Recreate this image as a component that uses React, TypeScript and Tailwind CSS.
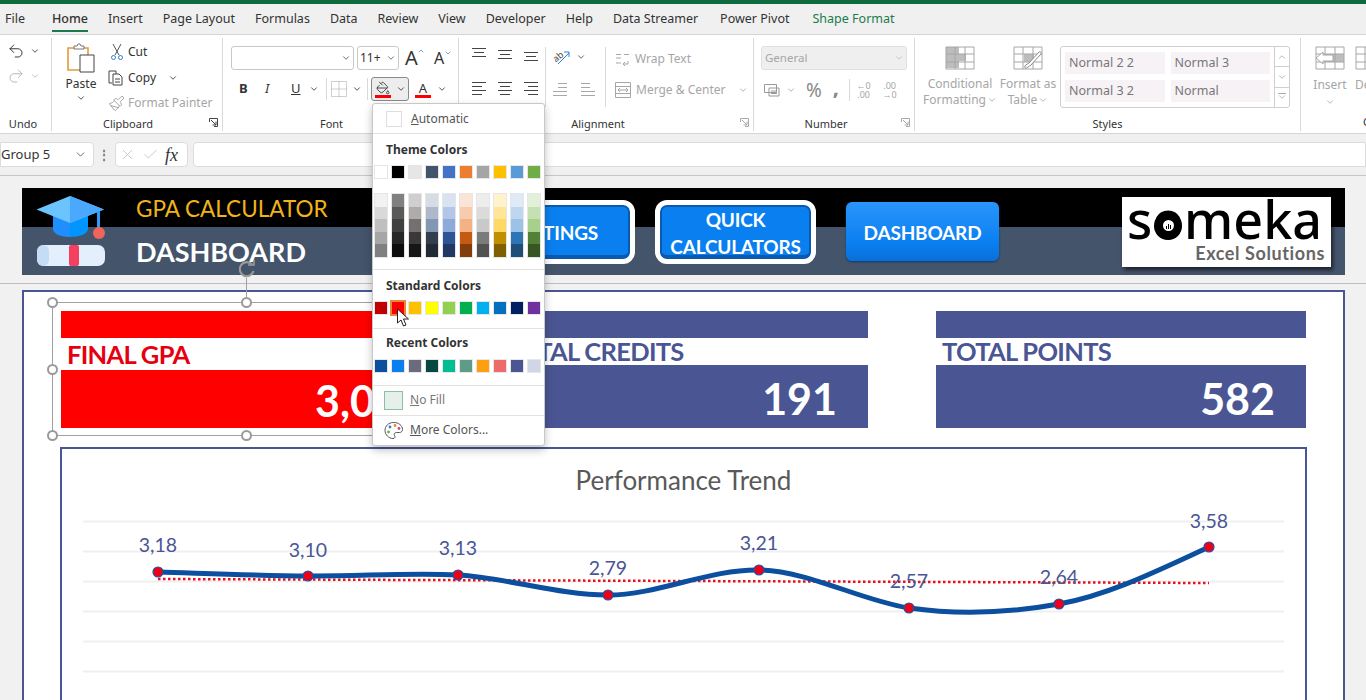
import React from 'react';
import { ChevronDown, ChevronUp, Paintbrush, PaintBucket, Redo2, Undo2, X, Check } from 'lucide-react';

const SANS = 'font-["Noto_Sans",sans-serif]';
const SHEET = 'font-["Lato",sans-serif]';

const TABS = ['Insert', 'Page Layout', 'Formulas', 'Data', 'Review', 'View', 'Developer', 'Help', 'Data Streamer'];

const THEME = ['#ffffff', '#000000', '#e7e6e6', '#44546a', '#4472c4', '#ed7d31', '#a5a5a5', '#ffc000', '#5b9bd5', '#70ad47'];
const SHADES = [
    ['#f2f2f2', '#d9d9d9', '#bfbfbf', '#a6a6a6', '#808080'],
    ['#808080', '#595959', '#404040', '#262626', '#0d0d0d'],
    ['#d0cece', '#aeabab', '#757070', '#3a3838', '#171616'],
    ['#d6dce4', '#adb9ca', '#8497b0', '#333f4f', '#222b35'],
    ['#d9e2f3', '#b4c6e7', '#8eaadb', '#2f5496', '#1f3864'],
    ['#fbe4d5', '#f7cbac', '#f4b183', '#c55a11', '#833c0b'],
    ['#ededed', '#dbdbdb', '#c9c9c9', '#7b7b7b', '#525252'],
    ['#fff2cc', '#ffe599', '#ffd966', '#bf8f00', '#7f6000'],
    ['#deeaf6', '#bdd7ee', '#9cc2e5', '#2e75b5', '#1f4e79'],
    ['#e2efd9', '#c5e0b3', '#a8d08d', '#538135', '#375623'],
];
const STANDARD = ['#c00000', '#ff0000', '#ffc000', '#ffff00', '#92d050', '#00b050', '#00b0f0', '#0070c0', '#002060', '#7030a0'];
const RECENT = ['#0b4f9e', '#0a7ff0', '#6b6b80', '#04483f', '#00bd94', '#5d9c87', '#ff9f10', '#ef6b6b', '#4a5694', '#d0d6e8'];

const POINTS = [
    { x: 158, y: 572, label: '3,18', ly: 552 },
    { x: 308, y: 576, label: '3,10', ly: 557 },
    { x: 458, y: 575, label: '3,13', ly: 555 },
    { x: 608, y: 595, label: '2,79', ly: 575 },
    { x: 759, y: 570, label: '3,21', ly: 550 },
    { x: 909, y: 608, label: '2,57', ly: 588 },
    { x: 1059, y: 604, label: '2,64', ly: 584 },
    { x: 1209, y: 547, label: '3,58', ly: 528 },
];

const Chev = ({ className = '' }: { className?: string }) => (
    <ChevronDown className={`w-[10px] h-[10px] shrink-0 ${className}`} strokeWidth={2} />
);

const Lines = ({ rows, color = '#444' }: { rows: [number, number, number][]; color?: string }) => (
    <svg className="block" width="16" height="14" viewBox="0 0 16 14" fill="none" stroke={color} strokeWidth="1">
        {rows.map(([x1, x2, y], i) => (
            <line key={i} x1={x1} x2={x2} y1={y + 0.5} y2={y + 0.5} />
        ))}
    </svg>
);

const Launcher = ({ color = '#666' }: { color?: string }) => (
    <svg className="absolute right-[4px] bottom-[4px]" width="9" height="9" viewBox="0 0 9 9" fill="none" stroke={color}>
        <path d="M0.5 4V0.5H8.5V8.5H5" />
        <path d="M2 2l5 5M7 3.5V7H3.5" />
    </svg>
);

const Group = ({ label, className, children, launcher, launcherColor, labelClass = '' }: {
    label: string;
    className: string;
    children: React.ReactNode;
    launcher?: boolean;
    launcherColor?: string;
    labelClass?: string;
}) => (
    <div className={`relative shrink-0 h-[93px] border-r border-[#d9d9d9] flex flex-col ${className}`}>
        <div className="flex-1 min-h-0">{children}</div>
        <div className={`text-center text-[11px] leading-[15px] text-[#333] ${labelClass}`}>{label}</div>
        {launcher && <Launcher color={launcherColor} />}
    </div>
);

const GridIcon = ({ variant }: { variant: 'cond' | 'table' | 'insert' }) => (
    <svg width="30" height="24" viewBox="0 0 30 24" fill="none">
        {variant === 'cond' && <path d="M1 1h13v7h7v7h-7v7H1z" fill="#bdbdbd" />}
        {variant === 'table' && <path d="M11 8h10v8H11z" fill="#bdbdbd" />}
        {variant === 'insert' && <path d="M10 8h19v8H10z" fill="#bdbdbd" />}
        <path d="M1 1h28v22H1zM1 8h28M1 16h28M10 1v22M20 1v22" stroke="#a6a6a6" />
        {variant === 'table' && <path d="M15 21c-2 2-4 1-3-1 1-2 3-2 4-3L26 6c1-1 3 1 2 2L18 19c-1 1-2 1-3 2z" fill="#fff" stroke="#8c8c8c" />}
        {variant === 'insert' && <path d="M1 12l7-6v3h10v6H8v3z" fill="#fff" stroke="#a6a6a6" />}
    </svg>
);

const Ribbon = () => (
    <div className={`flex h-[99px] pt-[3px] bg-white border-b border-[#d4d4d4] ${SANS}`}>
        <Group label="Undo" className="w-[52px]" labelClass="pr-[5px]">
            <div className="pl-[7px] pt-[4px] flex flex-col gap-[7px]">
                <div className="flex items-center gap-[5px] text-[#333]">
                    <Undo2 className="w-[18px] h-[18px]" strokeWidth={1.3} />
                    <Chev />
                </div>
                <div className="flex items-center gap-[5px] text-[#b5b5b5]">
                    <Redo2 className="w-[18px] h-[18px]" strokeWidth={1.3} />
                    <Chev />
                </div>
            </div>
        </Group>

        <Group label="Clipboard" className="w-[171px]" labelClass="pr-[18px]" launcher launcherColor="#444">
            <div className="flex">
                <div className="w-[56px] flex flex-col items-center pt-[5px] pl-[2px] text-[12px] leading-[15px] text-[#333]">
                    <svg width="30" height="30" viewBox="0 0 30 30" fill="none">
                        <path d="M2 5h20v22H2z" stroke="#e59a38" strokeWidth="1.6" />
                        <path d="M8 6V3h3l1-2h2l1 2h3v3z" fill="#fff" stroke="#777" />
                        <path d="M14 12h14v17H14z" fill="#fff" stroke="#444" />
                    </svg>
                    <span className="mt-[3px]">Paste</span>
                    <Chev className="mt-[2px]" />
                </div>
                <div className="flex flex-col text-[12px] leading-[20px] pt-[4px] gap-[6px] text-[#333]">
                    <div className="flex items-center gap-[3px] pl-[1px] h-[20px]">
                        <svg width="16" height="18" viewBox="0 0 16 18" fill="none" stroke="#555">
                            <path d="M4 1l6 11M12 1L6 12" />
                            <circle cx="4.500" cy="14.500" r="2" stroke="#2f7fd0" />
                            <circle cx="11.500" cy="14.500" r="2" stroke="#2f7fd0" />
                        </svg>
                        <span>Cut</span>
                    </div>
                    <div className="flex items-center gap-[4px] h-[20px]">
                        <svg width="16" height="16" viewBox="0 0 16 16" fill="none" stroke="#444">
                            <path d="M4 13H1V1h7v3" />
                            <path d="M5 4h6l3 3v8H5zM7 9h5M7 12h5" />
                        </svg>
                        <span>Copy</span>
                        <Chev className="ml-[8px]" />
                    </div>
                    <div className="flex items-center gap-[3px] h-[18px] text-[#a6a6a6]">
                        <Paintbrush className="w-[17px] h-[17px]" strokeWidth={1.4} />
                        <span className="whitespace-nowrap">Format Painter</span>
                    </div>
                </div>
            </div>
        </Group>

        <Group label="Font" className="w-[236px]" labelClass="pr-[18px]">
            <div className="pl-[8px] pt-[8px] flex flex-col gap-[7px]">
                <div className="flex items-center h-[24px]">
                    <div className="w-[123px] h-[24px] border border-[#c8c8c8] rounded-[3px] flex items-center justify-end pr-[2px]"><Chev className="text-[#555]" /></div>
                    <div className="ml-[3px] w-[42px] h-[24px] border border-[#c8c8c8] rounded-[3px] flex items-center justify-between px-[2px] text-[12px] text-[#333]">11+<Chev className="text-[#555]" /></div>
                    <div className="ml-[6px] text-[20px] leading-none text-[#333] relative w-[28px]">A<ChevronUp className="absolute left-[12px] -top-[1px] w-[8px] h-[8px] text-[#2f7fd0]" /></div>
                    <div className="text-[16px] leading-none text-[#333] relative ml-[1px]">A<ChevronDown className="absolute left-[10px] -top-[1px] w-[8px] h-[8px] text-[#2f7fd0]" /></div>
                </div>
                <div className="flex items-center h-[24px] text-[#333]">
                    <span className="ml-[8px] w-[26px] text-[13px] font-bold">B</span>
                    <span className="w-[26px] text-[13px] italic">I</span>
                    <span className="w-[18px] text-[13px] underline">U</span>
                    <Chev />
                    <div className="ml-[7px] h-[22px] w-px bg-[#d9d9d9]" />
                    <svg className="ml-[4px]" width="16" height="16" viewBox="0 0 16 16" fill="none" stroke="#a0a0a0" strokeDasharray="1 1">
                        <path d="M.5.5h15v15H.5zM8 .5v15M.5 8h15" />
                    </svg>
                    <Chev className="ml-[5px]" />
                    <div className="ml-[5px] h-[22px] w-px bg-[#d9d9d9]" />
                    <div className="ml-[3px] w-[38px] h-[24px] border border-[#8a8a8a] rounded-[3px] bg-[#ededed] flex items-center justify-center gap-[5px]">
                        <div className="flex flex-col items-center">
                            <PaintBucket className="w-[14px] h-[14px]" strokeWidth={1.5} />
                            <div className="w-[16px] h-[3px] bg-[#ff0000]" />
                        </div>
                        <Chev />
                    </div>
                    <div className="ml-[6px] flex flex-col items-center w-[16px]">
                        <span className="text-[13px] leading-[14px]">A</span>
                        <div className="w-[16px] h-[3px] bg-[#ff0000]" />
                    </div>
                    <Chev className="ml-[6px]" />
                </div>
            </div>
        </Group>

        <Group label="Alignment" className="w-[295px]" labelClass="pr-[16px]" launcher launcherColor="#aaa">
            <div className="pl-[12px] pt-[9px] flex text-[12px] text-[#a6a6a6]">
                <div className="flex flex-col gap-[20px] w-[74px]">
                    <div className="flex gap-[10px]">
                        <Lines rows={[[1, 15, 1], [3, 13, 5], [1, 15, 9]]} />
                        <Lines rows={[[1, 15, 3], [3, 13, 7], [1, 15, 11]]} />
                        <Lines rows={[[1, 15, 5], [3, 13, 9], [1, 15, 13]]} />
                    </div>
                    <div className="flex gap-[10px]">
                        <Lines rows={[[1, 15, 1], [1, 11, 5], [1, 15, 9], [1, 11, 13]]} />
                        <Lines rows={[[1, 15, 1], [3, 13, 5], [1, 15, 9], [3, 13, 13]]} />
                        <Lines rows={[[1, 15, 1], [5, 15, 5], [1, 15, 9], [5, 15, 13]]} />
                    </div>
                </div>
                <div className="w-px h-[60px] bg-[#d9d9d9] mr-[6px]" />
                <div className="flex flex-col gap-[17px] w-[53px] pt-[2px]">
                    <div className="flex items-center gap-[4px] text-[#444]">
                        <svg width="20" height="16" viewBox="0 0 20 16" fill="none">
                            <text x="1" y="11" fontSize="9" fill="#444" transform="rotate(-40 6 8)">ab</text>
                            <path d="M6 15L17 4M12 3h5v5" stroke="#2f7fd0" />
                        </svg>
                        <Chev />
                    </div>
                    <div className="flex gap-[12px]">
                        <Lines color="#a6a6a6" rows={[[6, 15, 1], [6, 15, 5], [1, 15, 9], [1, 15, 13]]} />
                        <Lines color="#a6a6a6" rows={[[1, 10, 1], [1, 10, 5], [1, 15, 9], [1, 15, 13]]} />
                    </div>
                </div>
                <div className="w-px h-[60px] bg-[#d9d9d9] mr-[9px]" />
                <div className="flex flex-col gap-[11px] pt-[2px]">
                    <div className="flex items-center gap-[4px] h-[20px]">
                        <svg width="16" height="18" viewBox="0 0 16 18" fill="none" stroke="#a6a6a6">
                            <path d="M1 4.500h5M1 8h5M9 4.500h5M1 13h5M13 11v3H8M10 12l-2 2 2 2" />
                        </svg>
                        <span>Wrap Text</span>
                    </div>
                    <div className="flex items-center gap-[5px] h-[20px] whitespace-nowrap">
                        <svg width="16" height="16" viewBox="0 0 16 16" fill="none" stroke="#a6a6a6">
                            <path d="M.5.500h15v15H.5zM.5 4.500h15M.5 11.500h15M3 8h10M5 6L3 8l2 2M11 6l2 2-2 2" />
                        </svg>
                        <span>Merge &amp; Center</span>
                        <Chev className="ml-[7px]" />
                    </div>
                </div>
            </div>
        </Group>

        <Group label="Number" className="w-[161px]" labelClass="pr-[16px]" launcher launcherColor="#aaa">
            <div className="pl-[7px] pt-[8px] text-[#a6a6a6]">
                <div className="w-[146px] h-[24px] rounded-[3px] bg-[#efefef] border border-[#e0e0e0] flex items-center text-[11.5px] pl-[3px] pr-[2px] justify-between">
                    General
                    <Chev className="text-[#bbb]" />
                </div>
                <div className="flex items-center h-[24px] mt-[8px] pl-[3px]">
                    <svg width="16" height="14" viewBox="0 0 16 14" fill="none" stroke="#999">
                        <path d="M.5 1.500h12v8H.5zM5 5h10v8H5zM7 8h6M7 10.500h6" />
                    </svg>
                    <Chev className="ml-[6px]" />
                    <span className="ml-[10px] text-[19px] leading-none text-[#888]">%</span>
                    <span className="ml-[11px] text-[22px] leading-none font-bold text-[#888] -mt-[8px]">,</span>
                    <div className="ml-[10px] h-[22px] w-px bg-[#d9d9d9]" />
                    <span className="ml-[6px] text-[9px] leading-[9px] w-[15px] text-center">←0<br />.00</span>
                    <span className="ml-[10px] text-[9px] leading-[9px] w-[17px] text-center">.00<br />→0</span>
                </div>
            </div>
        </Group>

        <Group label="Styles" className="w-[386px]">
            <div className="flex pt-[8px] text-[12px] leading-[16px] text-[#a6a6a6]">
                <div className="ml-[5px] w-[80px] flex flex-col items-center">
                    <GridIcon variant="cond" />
                    <span className="mt-[6px]">Conditional</span>
                    <span className="flex items-center gap-[1px]">Formatting<Chev /></span>
                </div>
                <div className="w-[60px] ml-[-2px] flex flex-col items-center">
                    <GridIcon variant="table" />
                    <span className="mt-[6px] whitespace-nowrap">Format as</span>
                    <span className="flex items-center gap-[1px]">Table<Chev /></span>
                </div>
                <div className="ml-[2px] w-[230px] h-[62px] border border-[#cfcfcf] rounded-[3px] flex text-[12.5px] text-[#777]">
                    <div className="flex-1 grid grid-cols-2 gap-x-[6px] gap-y-[6px] pl-[4px] pr-[4px] pt-[5px] pb-[5px]">
                        <div className="bg-[#f7f2f6] pl-[4px] flex items-center">Normal 2 2</div>
                        <div className="bg-[#f7f2f6] pl-[4px] flex items-center">Normal 3</div>
                        <div className="bg-[#f7f2f6] pl-[4px] flex items-center">Normal 3 2</div>
                        <div className="bg-[#f7f2f6] pl-[4px] flex items-center">Normal</div>
                    </div>
                    <div className="w-[15px] border-l border-[#cfcfcf] flex flex-col text-[#aaa]">
                        <div className="flex-1 flex items-center justify-center border-b border-[#cfcfcf]"><ChevronUp className="w-[10px] h-[10px]" /></div>
                        <div className="flex-1 flex items-center justify-center border-b border-[#cfcfcf]"><Chev /></div>
                        <div className="flex-1 flex flex-col items-center justify-center"><div className="w-[8px] h-px bg-[#aaa]" /><Chev className="-mt-[2px]" /></div>
                    </div>
                </div>
            </div>
        </Group>

        <div className="flex-1 relative overflow-hidden pt-[8px] text-[12px] leading-[16px] text-[#a6a6a6]">
            <div className="flex gap-[10px] pl-[14px]">
                <div className="w-[30px] flex flex-col items-center">
                    <GridIcon variant="insert" />
                    <span className="mt-[7px]">Insert</span>
                    <Chev className="mt-[4px]" />
                </div>
                <div className="w-[30px] flex flex-col items-start">
                    <GridIcon variant="table" />
                    <span className="mt-[7px]">De</span>
                </div>
            </div>
            <span className="absolute left-[62px] top-[76px] text-[11px] leading-[15px] text-[#333]">Cells</span>
        </div>
    </div>
);

const FormulaBar = () => (
    <div className={`h-[42px] bg-[#f0f0f0] border-b border-[#c6c6c6] pt-[8px] ${SANS}`}>
        <div className="flex items-center h-[25px]">
            <div className="w-[94px] h-[25px] bg-white border border-[#dcdcdc] rounded-r-[4px] flex items-center justify-between pr-[6px] text-[13px] text-[#333]">
                Group 5
                <ChevronDown className="w-[13px] h-[13px] text-[#555]" strokeWidth={1.6} />
            </div>
            <span className="w-[20px] text-center text-[#777] font-bold text-[12px]">⋮</span>
            <div className="ml-[1px] w-[73px] h-[25px] bg-white border border-[#dcdcdc] rounded-[4px] flex items-center pl-[3px] gap-[6px] text-[#c2c2c2]">
                <X className="w-[17px] h-[17px]" strokeWidth={1.2} />
                <Check className="w-[17px] h-[17px]" strokeWidth={1.2} />
                <span className="font-['Liberation_Serif',serif] italic text-[18px] leading-none text-[#333]">fx</span>
            </div>
            <div className="ml-[5px] flex-1 h-[25px] bg-white border border-[#dcdcdc] rounded-l-[4px]" />
        </div>
    </div>
);

const BlueButton = ({ lines, className = '' }: { lines: string[]; className?: string }) => (
    <div className={`flex items-center justify-center text-center text-white font-bold text-[19px] leading-[27px] tracking-[-0.2px] ${className}`}>
        <span>{lines.map((l) => <span key={l} className="block">{l}</span>)}</span>
    </div>
);

const Banner = () => (
    <div className={`ml-[22px] mt-[12px] w-[1323px] h-[87px] relative bg-[linear-gradient(#000_45%,#44546a_45%)] flex items-center ${SHEET}`}>
        <svg className="ml-[14px] shrink-0" width="72" height="74" viewBox="0 0 72 74">
            <path d="M17 18h17v24c-9 0-17-3-17-8z" fill="#1f8fff" />
            <path d="M34 18h18v16c0 5-9 8-18 8z" fill="#0095ff" />
            <path d="M0.500 14.500L34 1l34 13.500L34 28z" fill="#6cc4ff" />
            <path d="M34 1l34 13.500L34 28z" fill="#4aa8ff" />
            <rect x="61" y="16" width="3" height="22" fill="#2f9bff" />
            <circle cx="63" cy="38" r="6" fill="#f0645a" />
            <rect x="1" y="50" width="68" height="21" rx="7" fill="#e3effc" />
            <rect x="1" y="50" width="12" height="21" rx="6" fill="#c5dcf6" />
            <rect x="33" y="50" width="10" height="21" rx="2" fill="#f43f5e" />
        </svg>
        <div className="ml-[28px] w-[275px] shrink-0 flex flex-col">
            <span className="text-[22.5px] leading-[30px] text-[#f0b41a]">GPA CALCULATOR</span>
            <span className="mt-[11px] text-[27px] leading-[34px] font-bold text-white">DASHBOARD</span>
        </div>
        <BlueButton lines={['SETTINGS']} className="ml-[63px] w-[161px] h-[64px] rounded-[12px] border-[5px] border-white bg-[#0a7ff0] shadow-[inset_0_0_0_2px_#0a5ab0,inset_0_-4px_0_#0a5ab0] pt-[2px]" />
        <BlueButton lines={['QUICK', 'CALCULATORS']} className="ml-[20px] w-[161px] h-[64px] rounded-[12px] border-[5px] border-white bg-[#0a7ff0] shadow-[inset_0_0_0_2px_#0a5ab0,inset_0_-4px_0_#0a5ab0] pt-[2px]" />
        <BlueButton lines={['DASHBOARD']} className="ml-[30px] w-[153px] h-[59px] rounded-[6px] bg-[linear-gradient(#2a95fb,#0a7ff0_70%,#0a6fd8)] shadow-[0_1px_2px_#0b3a70] pt-[2px]" />
        <div className="ml-[123px] w-[209px] h-[70px] bg-white shadow-[2px_3px_4px_rgba(0,0,0,.6)] flex flex-col items-end pr-[6px] overflow-hidden">
            <span className="w-full pl-[5px] font-['Noto_Sans',sans-serif] font-medium text-[52px] leading-[48px] text-black -mt-[2px] whitespace-nowrap">
                s
                <span className="relative inline-block">
                    o
                    <span className="absolute left-[2px] right-[2px] top-[17px] bottom-[3px] rounded-full bg-black flex items-center justify-center">
                        <span className="w-[11px] h-[11px] rounded-full bg-white flex items-end justify-center gap-px pb-[2px]">
                            <span className="w-px h-[3px] bg-black" />
                            <span className="w-px h-[5px] bg-black" />
                            <span className="w-px h-[4px] bg-black" />
                        </span>
                    </span>
                </span>
                meka
            </span>
            <span className="text-[18px] leading-[20px] font-bold text-[#666] tracking-[0.6px]">Excel Solutions</span>
        </div>
    </div>
);

const Card = ({ title, value, color, titleColor, labelH, valueH }: {
    title: string;
    value: string;
    color: string;
    titleColor: string;
    labelH: string;
    valueH: string;
}) => (
    <div className="w-[370px] flex flex-col">
        <div className={`h-[27px] ${color}`} />
        <div className={`${labelH} pl-[6px] flex items-center text-[25.5px] tracking-[-0.7px] font-bold ${titleColor}`}>{title}</div>
        <div className={`${valueH} ${color} flex items-center justify-end pr-[31px] pt-[5px] text-white text-[43px] font-bold`}>{value}</div>
    </div>
);

const Chart = () => (
    <div className="ml-[36px] mt-[19px] w-[1247px] h-[300px] border-2 border-[#4a5694] bg-white">
        <div className={`text-center text-[26px] leading-[34px] text-[#595959] pt-[14px] pb-[3px] ${SHEET}`}>Performance Trend</div>
        <svg className="block" width="1243" height="200" viewBox="62 500 1243 200" fontFamily="Lato, sans-serif">
            {[521.5, 551.5, 581.5, 611.5, 641.5, 671.5].map((y) => (
                <line key={y} x1="83" x2="1284" y1={y} y2={y} stroke="#f0f0f0" strokeWidth="2" />
            ))}
            <line x1="158" y1="579" x2="1209" y2="583" stroke="#e8101c" strokeWidth="2.500" strokeDasharray="2.500 2.500" />
            <path
                d="M158 572C208 573.500 258 575.500 308 576C358 576.500 408 572.500 458 575C508 578 558 595 608 595C658 595 709 569 759 570C809 571 859 600 909 608C959 615 1009 613 1059 604C1109 595 1159 570 1209 547"
                fill="none"
                stroke="#0b4f9e"
                strokeWidth="5"
                strokeLinecap="round"
            />
            {POINTS.map((p) => (
                <g key={p.x}>
                    <circle cx={p.x} cy={p.y} r="5" fill="#f00018" stroke="#2a4f9a" strokeWidth="1.200" />
                    <text x={p.x} y={p.ly} textAnchor="middle" fontSize="19.500" fill="#4a5694">{p.label}</text>
                </g>
            ))}
        </svg>
    </div>
);

const Swatch = ({ c, selected }: { c: string; selected?: boolean }) => (
    <div
        className={`w-[12px] h-[12px] ${selected ? 'outline outline-2 outline-[#e8883a]' : 'outline outline-1 outline-[#e6e6e6]'}`}
        style={{ backgroundColor: c }}
    />
);

const SwatchRow = ({ colors, selected }: { colors: string[]; selected?: string }) => (
    <div className="flex gap-[5px] pl-[2px]">
        {colors.map((c) => <Swatch key={c} c={c} selected={c === selected} />)}
    </div>
);

const Heading = ({ children }: { children: React.ReactNode }) => (
    <div className="pl-[13px] text-[12px] leading-[16px] font-bold text-[#333]">{children}</div>
);

const ColorMenu = () => (
    <div className={`absolute left-[372px] top-[103px] w-[173px] h-[343px] bg-white border border-[#c8c8c8] rounded-[3px] shadow-[0_4px_8px_rgba(0,0,0,.25)] flex flex-col ${SANS}`}>
        <div className="h-[30px] flex items-center pl-[13px] gap-[9px] border-b border-[#e2e2e2] text-[12px] text-[#555]">
            <div className="w-[16px] h-[16px] border border-[#dedede]" />
            <span><span className="underline">A</span>utomatic</span>
        </div>
        <div className="pt-[8px]">
            <Heading>Theme Colors</Heading>
            <div className="mt-[8px]"><SwatchRow colors={THEME} /></div>
            <div className="mt-[16px] flex gap-[5px] pl-[2px]">
                {SHADES.map((col, i) => (
                    <div key={i} className="flex flex-col outline outline-1 outline-[#e6e6e6]">
                        {col.map((c, j) => <div key={j} className="w-[12px] h-[12.6px]" style={{ backgroundColor: c }} />)}
                    </div>
                ))}
            </div>
        </div>
        <div className="mt-[12px] border-t border-[#e2e2e2] pt-[8px] h-[59px]">
            <Heading>Standard Colors</Heading>
            <div className="mt-[8px]"><SwatchRow colors={STANDARD} selected="#ff0000" /></div>
        </div>
        <div className="border-t border-[#e2e2e2] pt-[6px] h-[57px]">
            <Heading>Recent Colors</Heading>
            <div className="mt-[9px]"><SwatchRow colors={RECENT} /></div>
        </div>
        <div className="h-[30px] border-t border-[#e2e2e2] flex items-center pl-[11px] gap-[7px] text-[12px] text-[#777]">
            <div className="w-[19px] h-[19px] bg-[#e6f0ea] border border-[#8cbfa3]" />
            <span><span className="underline">N</span>o Fill</span>
        </div>
        <div className="flex-1 border-t border-[#e2e2e2] flex items-center pl-[11px] gap-[7px] text-[12px] text-[#555]">
            <svg width="19" height="19" viewBox="0 0 19 19" fill="none">
                <path d="M9.500 1.500c-5 0-8.500 3.500-8.500 8 0 4 3.500 8 8 8 2 0 2.500-1.500 1.500-3-1-1.500 0-3 2-3h3c1.500 0 3-1 3-3 0-4-4-7-8.500-7z" stroke="#555" />
                <circle cx="6" cy="6" r="1.400" fill="#2f7fd0" />
                <circle cx="11" cy="4.500" r="1.400" fill="#e8883a" />
                <circle cx="15" cy="7.500" r="1.400" fill="#e0406a" />
                <circle cx="4.500" cy="11" r="1.400" fill="#70ad47" />
            </svg>
            <span><span className="underline">M</span>ore Colors...</span>
        </div>
    </div>
);

const Handle = ({ className }: { className: string }) => (
    <div className={`absolute w-[11px] h-[11px] rounded-full bg-white border-2 border-[#9a9a9a] ${className}`} />
);

const Selection = () => (
    <div className="absolute left-[52px] top-[302px] w-[388px] h-[134px] border border-[#a0a0a0]">
        <Handle className="-left-[6px] -top-[6px]" />
        <Handle className="-left-[6px] top-[61px]" />
        <Handle className="-left-[6px] -bottom-[6px]" />
        <Handle className="left-[188px] -top-[6px]" />
        <Handle className="left-[188px] -bottom-[6px]" />
        <div className="absolute left-[193px] -top-[25px] w-px h-[20px] bg-[#a0a0a0]" />
        <svg className="absolute left-[182px] -top-[44px]" width="24" height="20" viewBox="0 0 24 20" fill="none" stroke="#9a9a9a" strokeWidth="2.200">
            <path d="M18.500 12a7 7 0 1 1-1.500-6.500" />
            <path d="M13 6l6 0 0-5" strokeWidth="1.600" />
        </svg>
    </div>
);

export default function App() {
    return (
        <div className="relative w-[1366px] h-[700px] overflow-hidden bg-[#f1f1f1]">
            <div className="h-[4px] bg-[#0f6b3e]" />
            <div className={`h-[31px] bg-[#f0f0f0] border-b border-[#d4d4d4] flex items-center gap-[20px] pl-[5px] text-[12.5px] text-[#333] ${SANS}`}>
                <span className="mr-[7px]">File</span>
                <span className="relative font-medium">
                    Home
                    <span className="absolute left-0 right-0 -bottom-[4px] h-[2px] bg-[#1b7a4b]" />
                </span>
                {TABS.map((t) => <span key={t}>{t}</span>)}
                <span className="ml-[2px]">Power Pivot</span>
                <span className="ml-[3px] text-[#1b7a4b]">Shape Format</span>
            </div>
            <Ribbon />
            <FormulaBar />

            <Banner />
            <div className="mt-[8px] border-t border-[#bdbdbd]" />
            <div className={`ml-[22px] mt-[6px] w-[1323px] h-[420px] border-2 border-[#4a5694] bg-white pt-[19px] ${SHEET}`}>
                <div className="flex pl-[37px]">
                    <Card title="FINAL GPA" value="3,05" color="bg-[#ff0000]" titleColor="text-[#e6000f]" labelH="h-[32px]" valueH="h-[58px]" />
                    <div className="w-[67px]" />
                    <Card title="TOTAL CREDITS" value="191" color="bg-[#4a5694]" titleColor="text-[#4a5694]" labelH="h-[27px]" valueH="h-[63px]" />
                    <div className="w-[68px]" />
                    <Card title="TOTAL POINTS" value="582" color="bg-[#4a5694]" titleColor="text-[#4a5694]" labelH="h-[27px]" valueH="h-[63px]" />
                </div>
                <Chart />
            </div>

            <Selection />
            <ColorMenu />
            <svg className="absolute left-[396px] top-[308px]" width="14" height="20" viewBox="0 0 14 20">
                <path d="M1.500 1v14l3.500-3 2.500 6 2.500-1-2.500-6h5z" fill="#fff" stroke="#222" strokeWidth="1" />
            </svg>
        </div>
    );
}
